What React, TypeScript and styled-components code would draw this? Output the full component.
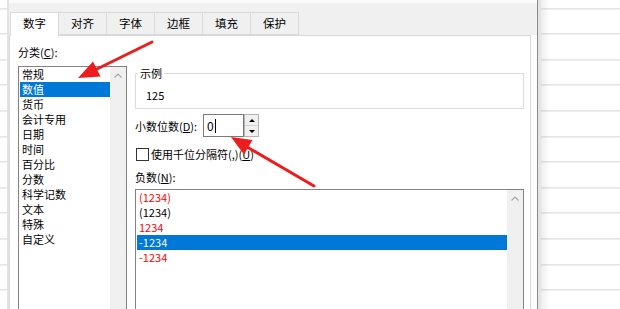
import React from "react";
import styled, { createGlobalStyle } from "styled-components";

const GlobalStyle = createGlobalStyle`
  body {
    margin: 0;
    background: #fff;
    font-family: "Noto Sans CJK SC", "Noto Sans", sans-serif;
    font-size: 11px;
    color: #000;
  }
`;

const tabs = ["数字", "对齐", "字体", "边框", "填充", "保护"];

const categories = [
  "常规",
  "数值",
  "货币",
  "会计专用",
  "日期",
  "时间",
  "百分比",
  "分数",
  "科学记数",
  "文本",
  "特殊",
  "自定义",
];

const negatives = [
  { text: "(1234)", red: true },
  { text: "(1234)", red: false },
  { text: "1234", red: true },
  { text: "-1234", red: false },
  { text: "-1234", red: true },
];

const App: React.FC = () => {
  return (
    <Screen>
      <GlobalStyle />
      <SheetStrip />
      <Dialog>
        <TabBar>
          {tabs.map((t, i) => (
            <Tab key={t} $active={i === 0}>
              {t}
            </Tab>
          ))}
        </TabBar>
        <Panel>
          <LeftCol>
            <FieldLabel>
              分类(<u>C</u>):
            </FieldLabel>
            <ListBox $height={250}>
              <ListItems>
                {categories.map((c, i) => (
                  <ListRow key={c} $selected={i === 1}>
                    {c}
                  </ListRow>
                ))}
              </ListItems>
              <ScrollTrack>
                <Chevron viewBox="0 0 8 5">
                  <path d="M0.5 4.5 L4 1 L7.5 4.5" />
                </Chevron>
              </ScrollTrack>
            </ListBox>
          </LeftCol>
          <RightCol>
            <GroupBox>
              <Legend>示例</Legend>
              <SampleValue>125</SampleValue>
            </GroupBox>
            <SpinRow>
              <FieldLabel>
                小数位数(<u>D</u>):
              </FieldLabel>
              <SpinField>
                <SpinInput>
                  0<Caret />
                </SpinInput>
                <SpinButtons>
                  <SpinButton>
                    <Triangle $up />
                  </SpinButton>
                  <SpinButton>
                    <Triangle />
                  </SpinButton>
                </SpinButtons>
              </SpinField>
            </SpinRow>
            <CheckRow>
              <CheckBox />
              <span>
                使用千位分隔符(,)(<u>U</u>)
              </span>
            </CheckRow>
            <NegLabel>
              负数(<u>N</u>):
            </NegLabel>
            <ListBox $height={140}>
              <ListItems>
                {negatives.map((n, i) => (
                  <ListRow key={i} $selected={i === 3} $red={n.red}>
                    {n.text}
                  </ListRow>
                ))}
              </ListItems>
              <ScrollTrack>
                <Chevron viewBox="0 0 8 5">
                  <path d="M0.5 4.5 L4 1 L7.5 4.5" />
                </Chevron>
              </ScrollTrack>
            </ListBox>
          </RightCol>
        </Panel>
      </Dialog>
      <Sheet />
      <Overlay viewBox="0 0 620 309">
        <line x1="152" y1="42" x2="95" y2="70" />
        <polygon points="78,78 100.5,76.5 93,61.5" />
        <line x1="314" y1="186" x2="247" y2="147" />
        <polygon points="231,137 252.5,140 244,154.5" />
      </Overlay>
    </Screen>
  );
};

export default App;

const Screen = styled.div`
  position: relative;
  width: 620px;
  height: 309px;
  overflow: hidden;
  display: flex;
`;

const gridLines = `
  repeating-linear-gradient(
    180deg,
    transparent 0,
    transparent 24.6px,
    #d5d5d5 24.6px,
    #d5d5d5 25.6px
  )
`;

const SheetStrip = styled.div`
  width: 9px;
  flex: none;
  background: ${gridLines};
  background-position: 0 -16.6px;
  box-shadow: inset -2px 0 0 #e2e2e2;
`;

const Sheet = styled.div`
  flex: 1;
  border-left: 3px solid #e4e4e4;
  background: linear-gradient(90deg, rgba(0, 0, 0, 0.07), rgba(0, 0, 0, 0) 9px),
    ${gridLines};
  background-position: 0 0, 0 -16.6px;
`;

const Dialog = styled.div`
  width: 529px;
  flex: none;
  box-sizing: border-box;
  border-right: 1px solid #8c8c8c;
  background: linear-gradient(
    180deg,
    #fbfbfb 0,
    #fbfbfb 3px,
    #f0f0f0 3px,
    #f0f0f0 35px,
    #fcfcfc 35px
  );
  display: flex;
  flex-direction: column;
`;

const TabBar = styled.div`
  height: 35px;
  box-sizing: border-box;
  padding: 12px 0 0 1px;
  display: flex;
  align-items: flex-start;
`;

const Tab = styled.div<{ $active?: boolean }>`
  position: relative;
  z-index: ${(p) => (p.$active ? 1 : 0)};
  height: ${(p) => (p.$active ? "24px" : "23px")};
  box-sizing: border-box;
  padding: 0 12px;
  margin-left: -1px;
  border: 1px solid #d9d9d9;
  border-bottom: ${(p) => (p.$active ? "none" : "1px solid #d9d9d9")};
  background: ${(p) => (p.$active ? "#fff" : "#f0f0f0")};
  font-size: 11.5px;
  line-height: 21px;
  color: #000;

  &:first-child {
    margin-left: 0;
  }
`;

const Panel = styled.div`
  width: 522px;
  flex: 1;
  min-height: 0;
  box-sizing: border-box;
  border: 1px solid #d9d9d9;
  border-bottom: none;
  background: #fff;
  display: grid;
  grid-template-columns: 109px 1fr;
  column-gap: 8px;
  align-items: start;
  padding: 8px 6px 0 8px;
  overflow: hidden;
`;

const LeftCol = styled.div`
  display: flex;
  flex-direction: column;
`;

const RightCol = styled.div`
  display: flex;
  flex-direction: column;
  padding-top: 22px;
`;

const FieldLabel = styled.div`
  line-height: 16px;
  white-space: nowrap;

  & + * {
    margin-top: 6px;
  }
`;

const ListBox = styled.div<{ $height: number }>`
  height: ${(p) => p.$height}px;
  box-sizing: border-box;
  border: 1px solid #828282;
  display: flex;
  background: #fff;
`;

const ListItems = styled.div`
  flex: 1;
  padding-left: 1px;
`;

const ListRow = styled.div<{ $selected?: boolean; $red?: boolean }>`
  height: 15px;
  line-height: 15px;
  padding-left: 2px;
  white-space: nowrap;
  background: ${(p) => (p.$selected ? "#0078d7" : "transparent")};
  color: ${(p) => (p.$selected ? "#fff" : p.$red ? "#ff0000" : "#000")};
`;

const ScrollTrack = styled.div`
  width: 16px;
  flex: none;
  background: #f0f0f0;
  display: flex;
  justify-content: center;
  padding-top: 6px;
`;

const Chevron = styled.svg`
  width: 8px;
  height: 5px;
  fill: none;
  stroke: #a6a6a6;
  stroke-width: 1.2;
`;

const GroupBox = styled.fieldset`
  margin: 0;
  min-width: 0;
  padding: 7px 10px 5px;
  border: 1px solid #dcdcdc;
`;

const Legend = styled.legend`
  padding: 0 2px;
  margin-left: -8px;
  line-height: 14px;
`;

const SampleValue = styled.div`
  line-height: 16px;
`;

const SpinRow = styled.div`
  display: flex;
  align-items: center;
  gap: 6px;
  margin-top: 5px;

  & > ${FieldLabel} + * {
    margin-top: 0;
  }
`;

const SpinField = styled.div`
  display: flex;
  height: 23px;
`;

const SpinInput = styled.div`
  width: 41px;
  box-sizing: border-box;
  border: 1px solid #7a7a7a;
  padding-left: 3px;
  display: flex;
  align-items: center;
  font-size: 12px;
`;

const Caret = styled.span`
  width: 1px;
  height: 14px;
  margin-left: 1px;
  background: #000;
`;

const SpinButtons = styled.div`
  width: 15px;
  box-sizing: border-box;
  border: 1px solid #b4b4b4;
  display: flex;
  flex-direction: column;
  background: #f0f0f0;
`;

const SpinButton = styled.div`
  flex: 1;
  display: flex;
  align-items: center;
  justify-content: center;

  & + & {
    border-top: 1px solid #d4d4d4;
  }
`;

const Triangle = styled.span<{ $up?: boolean }>`
  width: 0;
  height: 0;
  border-left: 3px solid transparent;
  border-right: 3px solid transparent;
  border-top: ${(p) => (p.$up ? "none" : "3px solid #000")};
  border-bottom: ${(p) => (p.$up ? "3px solid #000" : "none")};
`;

const CheckRow = styled.div`
  display: flex;
  align-items: center;
  gap: 2px;
  margin-top: 9px;
  line-height: 16px;
  white-space: nowrap;
`;

const CheckBox = styled.span`
  width: 13px;
  height: 13px;
  box-sizing: border-box;
  margin-left: 1px;
  border: 1px solid #333;
  background: #fff;
`;

const NegLabel = styled(FieldLabel)`
  margin-top: 7px;

  & + * {
    margin-top: 4px;
  }
`;

const Overlay = styled.svg`
  position: absolute;
  left: 0;
  top: 0;
  width: 620px;
  height: 309px;
  pointer-events: none;

  line {
    stroke: #ee1c1c;
    stroke-width: 3;
    stroke-linecap: round;
  }

  polygon {
    fill: #ee1c1c;
  }
`;
